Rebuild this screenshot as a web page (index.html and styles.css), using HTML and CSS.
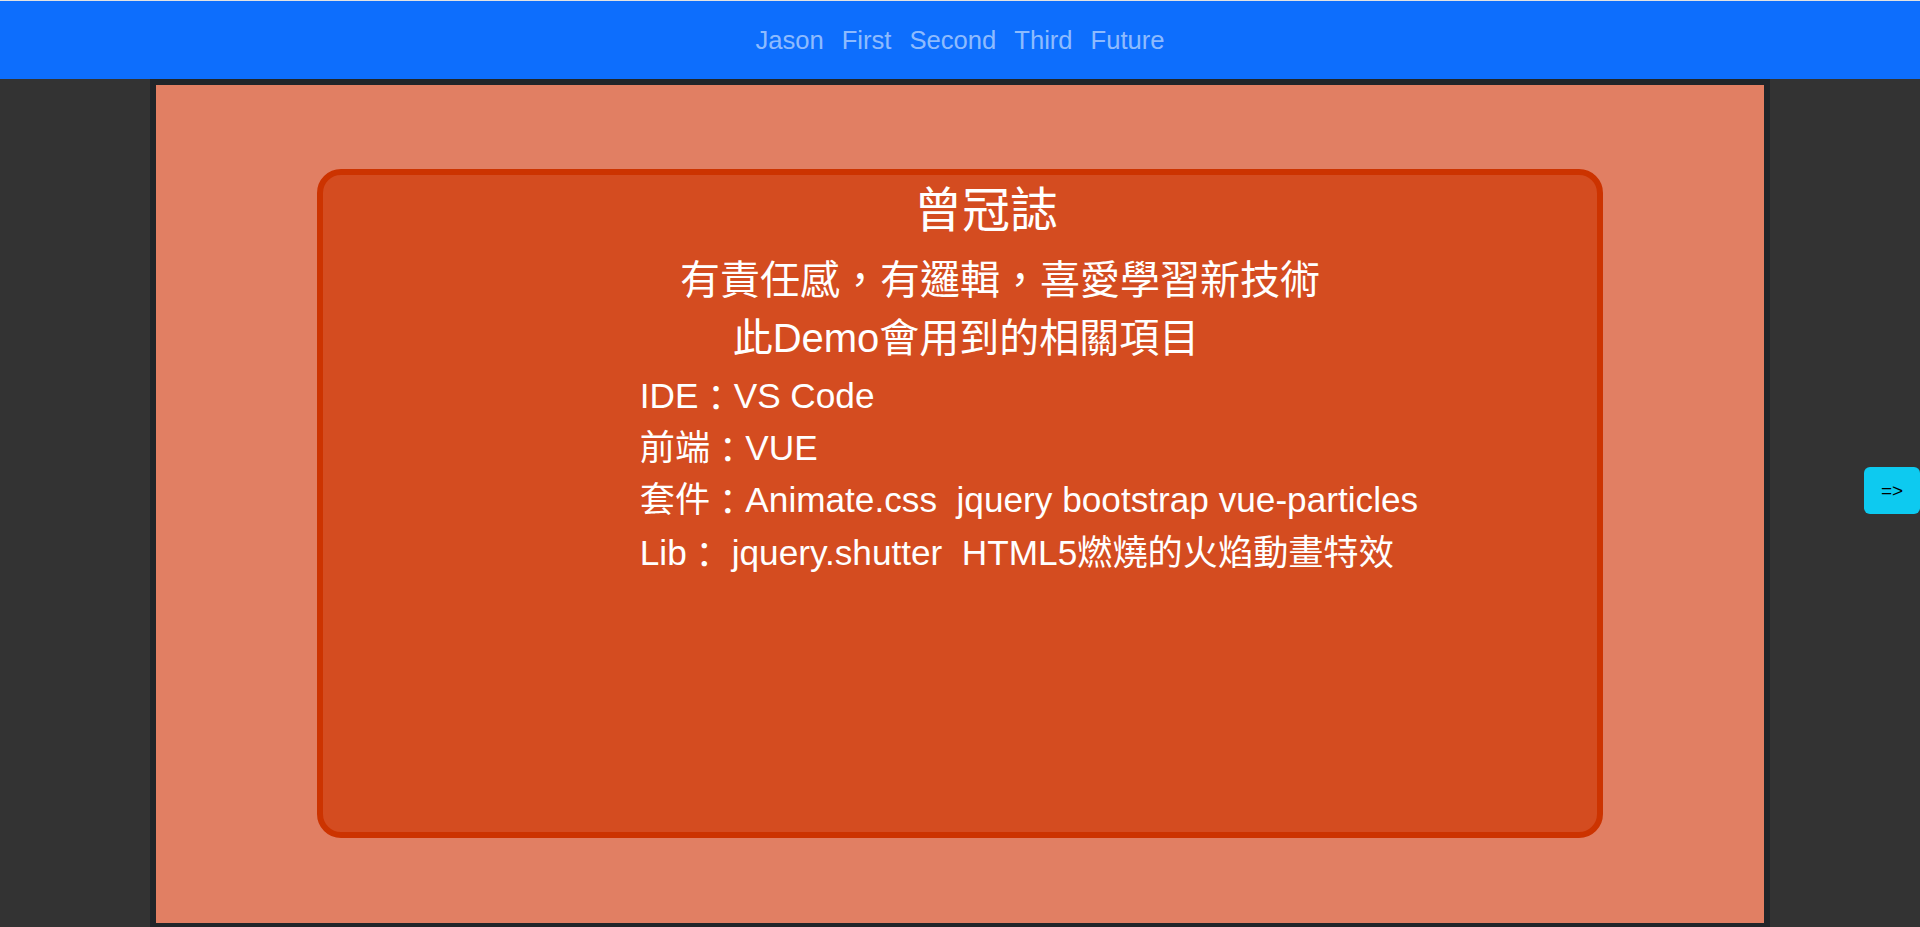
FILE: index.html
```html
<!DOCTYPE html>
<html lang="zh-Hant">
<head>
<meta charset="utf-8">
<title>Jason</title>
<link rel="stylesheet" href="styles.css">
</head>
<body>
<nav class="navbar">
  <div class="nav-links">
    <a class="nav-link" href="#">Jason</a>
    <a class="nav-link" href="#">First</a>
    <a class="nav-link" href="#">Second</a>
    <a class="nav-link" href="#">Third</a>
    <a class="nav-link" href="#">Future</a>
  </div>
</nav>
<main class="stage">
  <section class="card">
    <h1 class="title">曾冠誌</h1>
    <h2 class="subtitle subtitle--lead">有責任感，有邏輯，喜愛學習新技術</h2>
    <h2 class="subtitle subtitle--demo">此Demo會用到的相關項目</h2>
    <ul class="tools">
      <li>IDE<span class="sep">：</span>VS Code</li>
      <li>前端<span class="sep">：</span>VUE</li>
      <li>套件<span class="sep">：</span>Animate.css&nbsp; jquery bootstrap vue-particles</li>
      <li>Lib<span class="sep">：</span> jquery.shutter&nbsp; HTML5燃燒的火焰動畫特效</li>
    </ul>
  </section>
</main>
<button class="next-btn" type="button">=&gt;</button>
</body>
</html>
```
FILE: styles.css
```css
html, body {
  margin: 0;
  padding: 0;
}

body {
  background: #333333;
  font-family: "Liberation Sans", "Noto Sans CJK TC", sans-serif;
  overflow: hidden;
  height: 927px;
}

.navbar {
  height: 78px;
  border-top: 1px solid #e2e2e2;
  background: #0d6efd;
  display: flex;
  justify-content: center;
  align-items: center;
}

.nav-links {
  display: flex;
  gap: 18px;
}

.nav-link {
  font-size: 25.6px;
  line-height: 1.5;
  color: rgba(255, 255, 255, 0.55);
  text-decoration: none;
}

.stage {
  width: 1620px;
  height: 850px;
  margin: 0 auto;
  box-sizing: border-box;
  border: 6px solid #212529;
  background: #e17f63;
  padding-top: 84px;
}

.card {
  width: 80%;
  height: 669px;
  margin: 0 auto;
  box-sizing: border-box;
  border: 6px solid #cc3300;
  border-radius: 24px;
  background: #d44c20;
  color: #ffffff;
  padding-top: 6px;
}

.title {
  margin: 0;
  font-size: 48px;
  line-height: 60px;
  font-weight: 400;
  text-align: center;
  padding-left: 52px;
}

.subtitle {
  margin: 0;
  font-size: 40px;
  font-weight: 400;
  text-align: center;
}

.subtitle--lead {
  line-height: 53.5px;
  margin-top: 13px;
  padding-left: 80px;
}

.subtitle--demo {
  line-height: 60.5px;
  padding-left: 12px;
}

.tools {
  list-style: none;
  margin: 2px 0 0;
  padding: 0 0 0 317px;
  font-size: 35.2px;
  line-height: 52.2px;
  text-align: left;
}

.sep {
  line-height: 0;
  vertical-align: -0.09em;
}

.next-btn {
  position: absolute;
  right: 0;
  top: 467px;
  width: 56px;
  height: 47px;
  border: none;
  border-radius: 6px;
  background: #0dcaf0;
  color: #000000;
  font-family: "Liberation Sans", sans-serif;
  font-size: 19px;
  padding: 0;
}
```
